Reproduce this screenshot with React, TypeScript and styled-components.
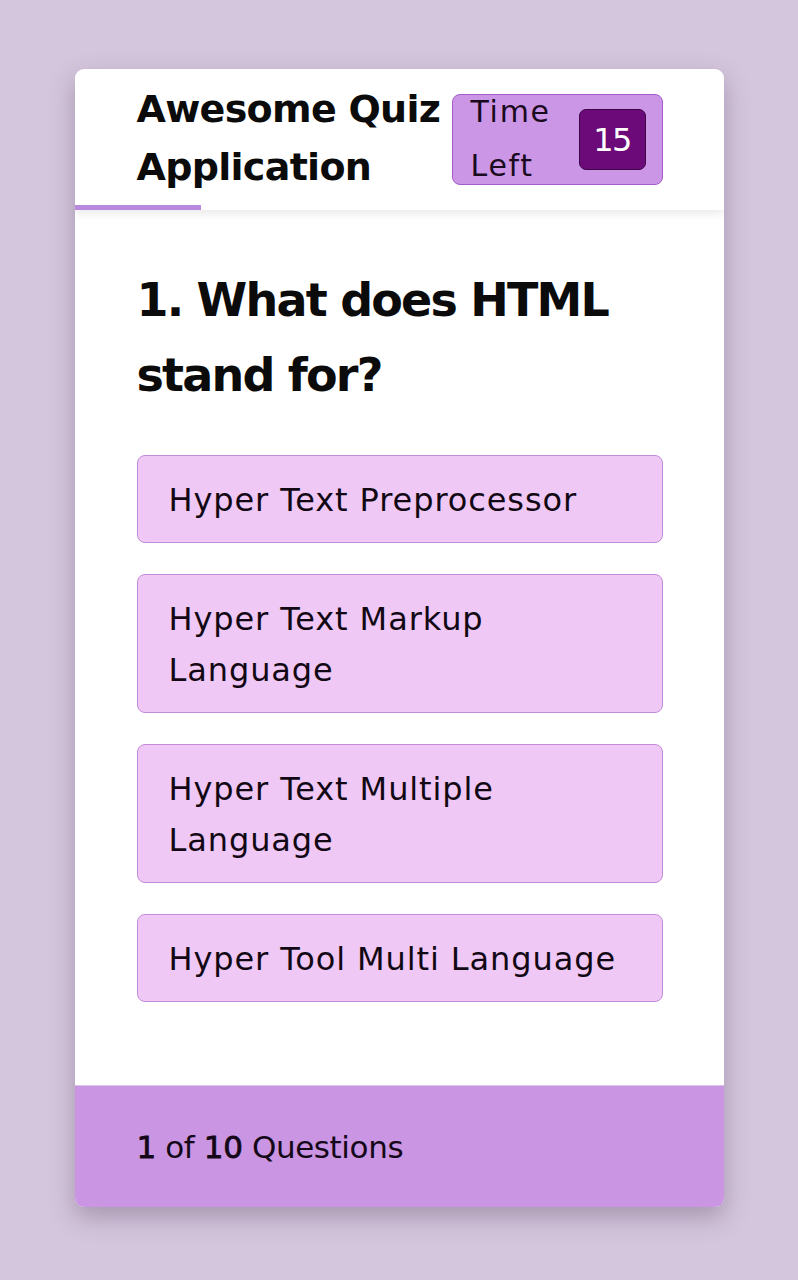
import React from "react";
import styled, { createGlobalStyle } from "styled-components";

const Global = createGlobalStyle`
  html, body { margin: 0; padding: 0; }
  body {
    background: #d4c6dd;
    font-family: "DejaVu Sans", "Open Sans", sans-serif;
    color: #111;
  }
`;

const Page = styled.div`
  min-height: 1280px;
  padding-top: 69px;
  box-sizing: border-box;
  display: flex;
  justify-content: center;
  align-items: flex-start;
`;

const Card = styled.div`
  width: 649px;
  background: #fff;
  border-radius: 9px;
  overflow: hidden;
  box-shadow: 0 10px 24px rgba(80, 60, 90, 0.35);
`;

const Header = styled.header`
  position: relative;
  height: 141px;
  box-sizing: border-box;
  padding: 11px 61px 0 62px;
  display: flex;
  align-items: flex-start;
  justify-content: space-between;
  box-shadow: 0 4px 8px rgba(0, 0, 0, 0.08);
  z-index: 1;
`;

const Title = styled.h1`
  margin: 0;
  width: 312px;
  font-size: 38px;
  line-height: 58px;
  font-weight: 700;
  letter-spacing: -0.7px;
  color: #0b0b0b;
`;

const Timer = styled.div`
  width: 211px;
  height: 91px;
  box-sizing: border-box;
  margin-top: 14px;
  background: #cc96e6;
  border: 1px solid #a45ccc;
  border-radius: 8px;
  display: flex;
  align-items: center;
  justify-content: space-between;
  padding: 0 16px 0 18px;
  overflow: hidden;
`;

const TimerLabel = styled.div`
  font-size: 30px;
  line-height: 54px;
  letter-spacing: 1.7px;
  font-weight: 400;
  color: #1a0a1e;
  margin-top: -2px;
`;

const TimerValue = styled.div`
  width: 67px;
  height: 61px;
  box-sizing: border-box;
  background: #6b0a78;
  border: 1px solid #3e0547;
  border-radius: 7px;
  color: #fff;
  font-size: 32px;
  letter-spacing: -1.5px;
  font-weight: 400;
  display: flex;
  align-items: center;
  justify-content: center;
`;

const Progress = styled.div`
  position: absolute;
  left: 0;
  bottom: 0;
  height: 5px;
  background: #b889dd;
`;

const Body = styled.main`
  padding: 53px 61px 83px 62px;
  display: flex;
  flex-direction: column;
`;

const Question = styled.h2`
  margin: 0 0 42px;
  font-size: 46px;
  line-height: 75px;
  font-weight: 700;
  letter-spacing: -1.8px;
  color: #0b0b0b;
`;

const Options = styled.div`
  display: flex;
  flex-direction: column;
  gap: 31px;
`;

const Option = styled.button`
  display: block;
  width: 100%;
  text-align: left;
  box-sizing: border-box;
  padding: 19px 20px 16px 31px;
  background: #efc8f6;
  border: 1px solid #c48bd8;
  border-radius: 8px;
  font-family: inherit;
  font-size: 32px;
  line-height: 51px;
  letter-spacing: 0.9px;
  color: #120814;
  cursor: pointer;
`;

const Footer = styled.footer`
  height: 122px;
  box-sizing: border-box;
  background: #ca95e2;
  display: flex;
  align-items: center;
  padding: 0 62px;
  font-size: 31px;
  letter-spacing: -0.4px;
  color: #140818;
  border-top: 1px solid #d9c4e4;
`;

const Num = styled.span`
  -webkit-text-stroke: 0.8px #140818;
`;

const options = [
  "Hyper Text Preprocessor",
  "Hyper Text Markup Language",
  "Hyper Text Multiple Language",
  "Hyper Tool Multi Language",
];

export default function App() {
  return (
    <>
      <Global />
      <Page>
        <Card>
          <Header>
            <Title>Awesome Quiz Application</Title>
            <Timer>
              <TimerLabel>
                Time
                <br />
                Left
              </TimerLabel>
              <TimerValue>15</TimerValue>
            </Timer>
            <Progress style={{ width: "126px" }} />
          </Header>
          <Body>
            <Question>1. What does HTML stand for?</Question>
            <Options>
              {options.map((o) => (
                <Option key={o}>{o}</Option>
              ))}
            </Options>
          </Body>
          <Footer>
            <Num>1</Num>&nbsp;of&nbsp;<Num>10</Num>&nbsp;Questions
          </Footer>
        </Card>
      </Page>
    </>
  );
}
